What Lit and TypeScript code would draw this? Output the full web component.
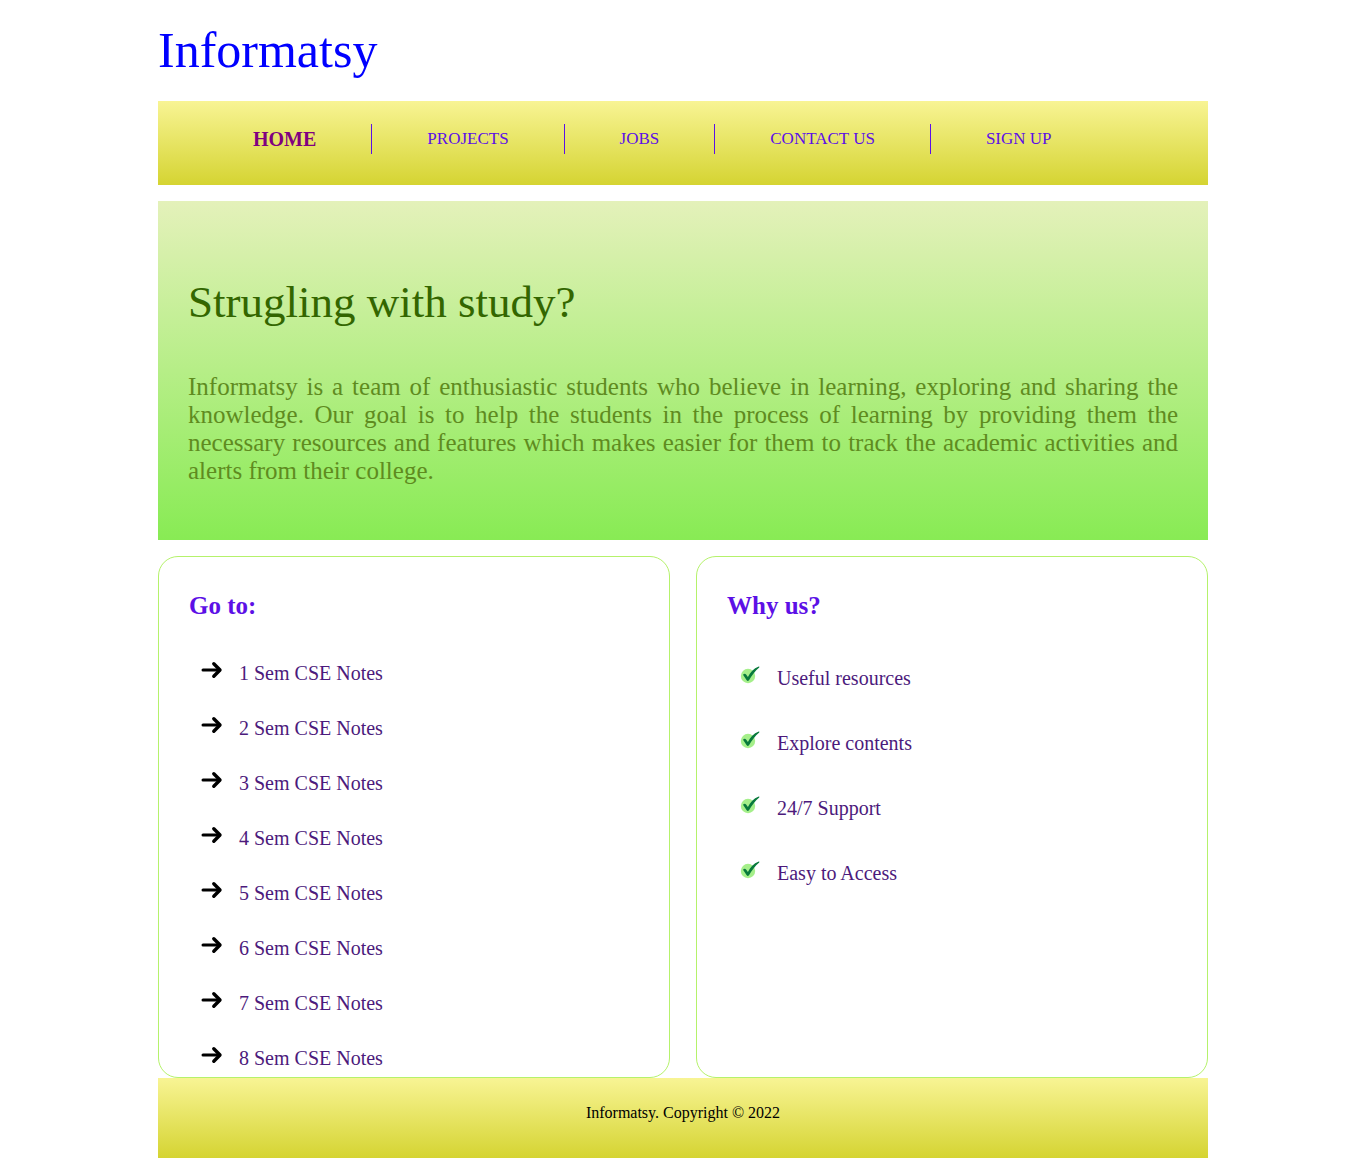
import { LitElement, html, css } from "lit";
import { customElement } from "lit/decorators.js";

const NAV = ["Projects", "Jobs", "Contact us", "Sign up"];
const REASONS = ["Useful resources", "Explore contents", "24/7 Support", "Easy to Access"];
const SEMESTERS = [1, 2, 3, 4, 5, 6, 7, 8];

const arrow = html`<svg class="icon" viewBox="0 0 25 18" aria-hidden="true">
  <path d="M4 9H20.500" fill="none" stroke="#000" stroke-width="3" stroke-linecap="round"/>
  <path d="M14.800 2.700 21 9l-6.200 6.300" fill="none" stroke="#000" stroke-width="3.400" stroke-linecap="round" stroke-linejoin="round"/>
</svg>`;

const check = html`<svg class="icon" viewBox="0 0 25 18" aria-hidden="true">
  <circle cx="11" cy="10" r="7.200" fill="#a5ef8a"/>
  <path d="M6 8.700Q7.800 7 9.100 8.600L10.900 11C13.200 6.500 16.500 2.600 21.800 .6Q22.800 .5 22.200 1.400C18 5 14.800 9.200 12 14.300Q10.800 15.800 9.700 14.300Z" fill="#087a3c"/>
</svg>`;

@customElement("app-root")
export class AppRoot extends LitElement {
  static styles = css`
    :host {
      display: block;
      font-family: "Liberation Serif", "Times New Roman", serif;
      font-size: 16px;
      color: #000;
    }
    * { box-sizing: border-box; }
    a { color: inherit; text-decoration: none; }
    h1, h2, p, ul { margin: 0; padding: 0; font-weight: normal; }
    ul { list-style: none; }
    .page { max-width: 1050px; margin: 0 auto; }
    .brand {
      display: block;
      padding: 23px 0;
      font-size: 50px;
      line-height: 55px;
      color: #00f;
    }
    .bar { background: linear-gradient(#f8f494, #d5d432); }
    .nav { padding: 23px 40px 31px; }
    .menu { display: flex; }
    .menu li {
      padding: 0 55px;
      border-right: 1px solid #5c10e6;
      font-size: 17px;
      line-height: 30px;
      text-transform: uppercase;
      color: #5c10e6;
    }
    .menu li:last-child { border-right: 0; }
    .menu .current {
      font-size: 20px;
      font-weight: bold;
      color: #800080;
    }
    .hero {
      margin: 16px 0;
      padding: 76px 30px 55px;
      background: linear-gradient(#e4f1ba, #88eb54);
    }
    .hero h1 { font-size: 45px; line-height: 51px; color: #336600; }
    .hero p {
      margin-top: 45px;
      font-size: 25px;
      line-height: 28px;
      text-align: justify;
      color: #5f8b1f;
    }
    .columns { display: grid; grid-template-columns: 1fr 1fr; gap: 26px; }
    .card {
      padding: 34px 30px 0;
      border: 1px solid #b5f26b;
      border-radius: 20px;
    }
    .card h2 { font-size: 25px; line-height: 29px; font-weight: bold; color: #5c10e6; }
    .list {
      display: flex;
      flex-direction: column;
      padding-left: 10px;
      font-size: 20px;
      color: #4c1a7c;
    }
    .list li { display: flex; align-items: center; gap: 15px; height: 35px; }
    .notes { gap: 20px; padding-top: 36px; padding-bottom: 1px; }
    .reasons { gap: 30px; padding-top: 41px; }
    .icon { width: 25px; height: 18px; margin-bottom: 8px; }
    .footer { padding: 26px 0 36px; text-align: center; line-height: 18px; }
  `;

  render() {
    return html`
      <div class="page">
        <header>
          <a class="brand" href="#">Informatsy</a>
          <nav class="bar nav">
            <ul class="menu">
              <li class="current"><a href="#" aria-current="page">Home</a></li>
              ${NAV.map((name) => html`<li><a href="#">${name}</a></li>`)}
            </ul>
          </nav>
        </header>
        <main>
          <section class="hero">
            <h1>Strugling with study?</h1>
            <p>Informatsy is a team of enthusiastic students who believe in learning, exploring and sharing the knowledge. Our goal is to help the students in the process of learning by providing them the necessary resources and features which makes easier for them to track the academic activities and alerts from their college.</p>
          </section>
          <div class="columns">
            <section class="card">
              <h2>Go to:</h2>
              <ul class="list notes">
                ${SEMESTERS.map((n) => html`<li>${arrow}<a href="#">${n} Sem CSE Notes</a></li>`)}
              </ul>
            </section>
            <section class="card">
              <h2>Why us?</h2>
              <ul class="list reasons">
                ${REASONS.map((text) => html`<li>${check}<span>${text}</span></li>`)}
              </ul>
            </section>
          </div>
        </main>
        <footer class="bar footer">Informatsy. Copyright © 2022</footer>
      </div>
    `;
  }
}
